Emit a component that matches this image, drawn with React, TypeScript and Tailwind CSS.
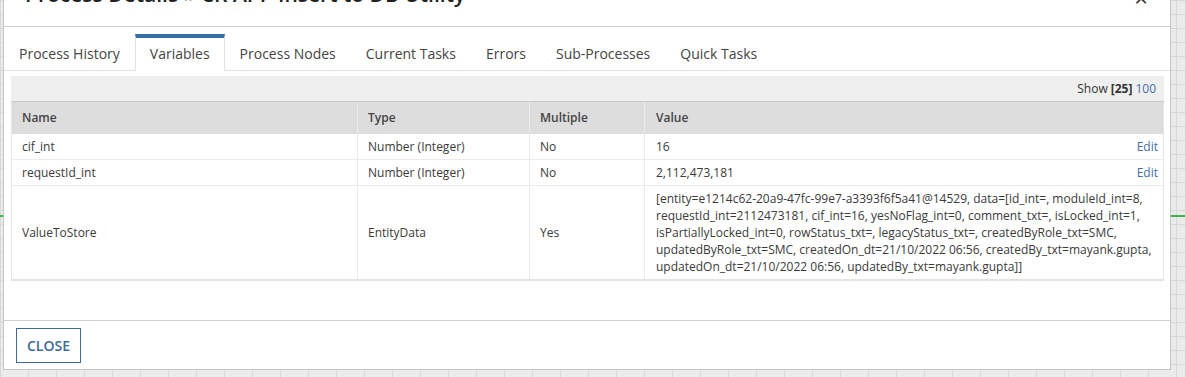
const tabs = ["Process History", "Variables", "Process Nodes", "Current Tasks", "Errors", "Sub-Processes", "Quick Tasks"]

const valueLines = [
  "[entity=e1214c62-20a9-47fc-99e7-a3393f6f5a41@14529, data=[id_int=, moduleId_int=8,",
  "requestId_int=2112473181, cif_int=16, yesNoFlag_int=0, comment_txt=, isLocked_int=1,",
  "isPartiallyLocked_int=0, rowStatus_txt=, legacyStatus_txt=, createdByRole_txt=SMC,",
  "updatedByRole_txt=SMC, createdOn_dt=21/10/2022 06:56, createdBy_txt=mayank.gupta,",
  "updatedOn_dt=21/10/2022 06:56, updatedBy_txt=mayank.gupta]]",
]

const rows = [
  { name: "cif_int", type: "Number (Integer)", multiple: "No", value: "16" },
  { name: "requestId_int", type: "Number (Integer)", multiple: "No", value: "2,112,473,181" },
]

function App() {
  return (
    <div className="relative h-[377px] overflow-hidden bg-[#ebebeb] bg-[linear-gradient(to_right,#d8d8d8_1px,transparent_1px),linear-gradient(to_bottom,#d8d8d8_1px,transparent_1px)] bg-[size:28px_14px] font-['Open_Sans',sans-serif]">
      {/* connector line of the diagram behind the dialog */}
      <div className="absolute left-0 right-0 top-[215px] h-[2px] bg-[#3cb44b]" />

      <div className="relative z-10 ml-[3px] mt-[-40px] w-[1168px] border border-[#c4c4c4] bg-white">
        <div className="flex h-[66px] items-end justify-between border-b border-[#d0d0d0] pb-[17px] pl-[21px] pr-[22px]">
          <h1 className="text-[21px] font-semibold leading-[30px] text-[#222]">Process Details » CR APP Insert to DB Utility</h1>
          <span className="mb-[-4px] text-[24px] leading-[30px] text-[#333]">×</span>
        </div>

        <ul className="flex border-b border-[#e2e2e2] pt-[7px] text-[14px] text-[#444]">
          {tabs.map((t) => (
            <li
              key={t}
              className={
                t === "Variables"
                  ? "-mb-px border-x border-t-4 border-x-[#e0e0e0] border-t-[#3a6ea6] bg-white px-[14px] pb-[6px] pt-[6px] leading-[20px]"
                  : "border-t-4 border-transparent px-[15px] pb-[6px] pt-[6px] leading-[20px]"
              }
            >
              {t}
            </li>
          ))}
        </ul>

        <div className="pb-[39px] pl-[7px] pr-[6px] pt-[5px]">
          <div className="border-b-2 border-[#e4e4e4]">
            <div className="flex h-[26px] items-center justify-end border-b border-[#c9c9c9] bg-[#efefef] pr-[8px] text-[12px] text-[#333]">
              Show <b className="mx-[3px] font-bold">[25]</b>
              <span className="text-[#3f6fa6]">100</span>
            </div>
            <table className="w-full table-fixed border-collapse border-x border-[#e6e6e6] text-left text-[12px] text-[#3a3a3a]">
              <colgroup>
                <col className="w-[346px]" />
                <col className="w-[172px]" />
                <col className="w-[115px]" />
                <col />
              </colgroup>
              <thead>
                <tr className="h-[32px] bg-[#dddddd] text-[#444]">
                  <th className="px-[10px] font-semibold">Name</th>
                  <th className="border-l border-[#ececec] px-[10px] font-semibold">Type</th>
                  <th className="border-l border-[#ececec] px-[10px] font-semibold">Multiple</th>
                  <th className="border-l border-[#ececec] px-[11px] font-semibold">Value</th>
                </tr>
              </thead>
              <tbody>
                {rows.map((r) => (
                  <tr key={r.name} className="border-b border-[#ebebeb] leading-[17px]">
                    <td className="px-[10px] py-[4px]">{r.name}</td>
                    <td className="border-l border-[#ebebeb] px-[10px] py-[4px]">{r.type}</td>
                    <td className="border-l border-[#ebebeb] px-[10px] py-[4px]">{r.multiple}</td>
                    <td className="border-l border-[#ebebeb] py-[4px] pl-[11px] pr-[5px]">
                      <div className="flex justify-between">
                        <span>{r.value}</span>
                        <span className="text-[#3f6fa6]">Edit</span>
                      </div>
                    </td>
                  </tr>
                ))}
                <tr className="leading-[17px]">
                  <td className="px-[10px] py-[4px]">ValueToStore</td>
                  <td className="border-l border-[#ebebeb] px-[10px] py-[4px]">EntityData</td>
                  <td className="border-l border-[#ebebeb] px-[10px] py-[4px]">Yes</td>
                  <td className="border-l border-[#ebebeb] py-[4px] pl-[11px] pr-[5px]">
                    {valueLines.map((l) => (
                      <div key={l} className="whitespace-nowrap">{l}</div>
                    ))}
                  </td>
                </tr>
              </tbody>
            </table>
          </div>
        </div>

        <div className="border-t border-[#cfcfcf] pb-[6px] pl-[12px] pt-[7px]">
          <button className="h-[35px] w-[65px] border border-[#3d6a9a] text-[14px] font-semibold text-[#3d6a9a]">CLOSE</button>
        </div>
      </div>
    </div>
  )
}

export default App
